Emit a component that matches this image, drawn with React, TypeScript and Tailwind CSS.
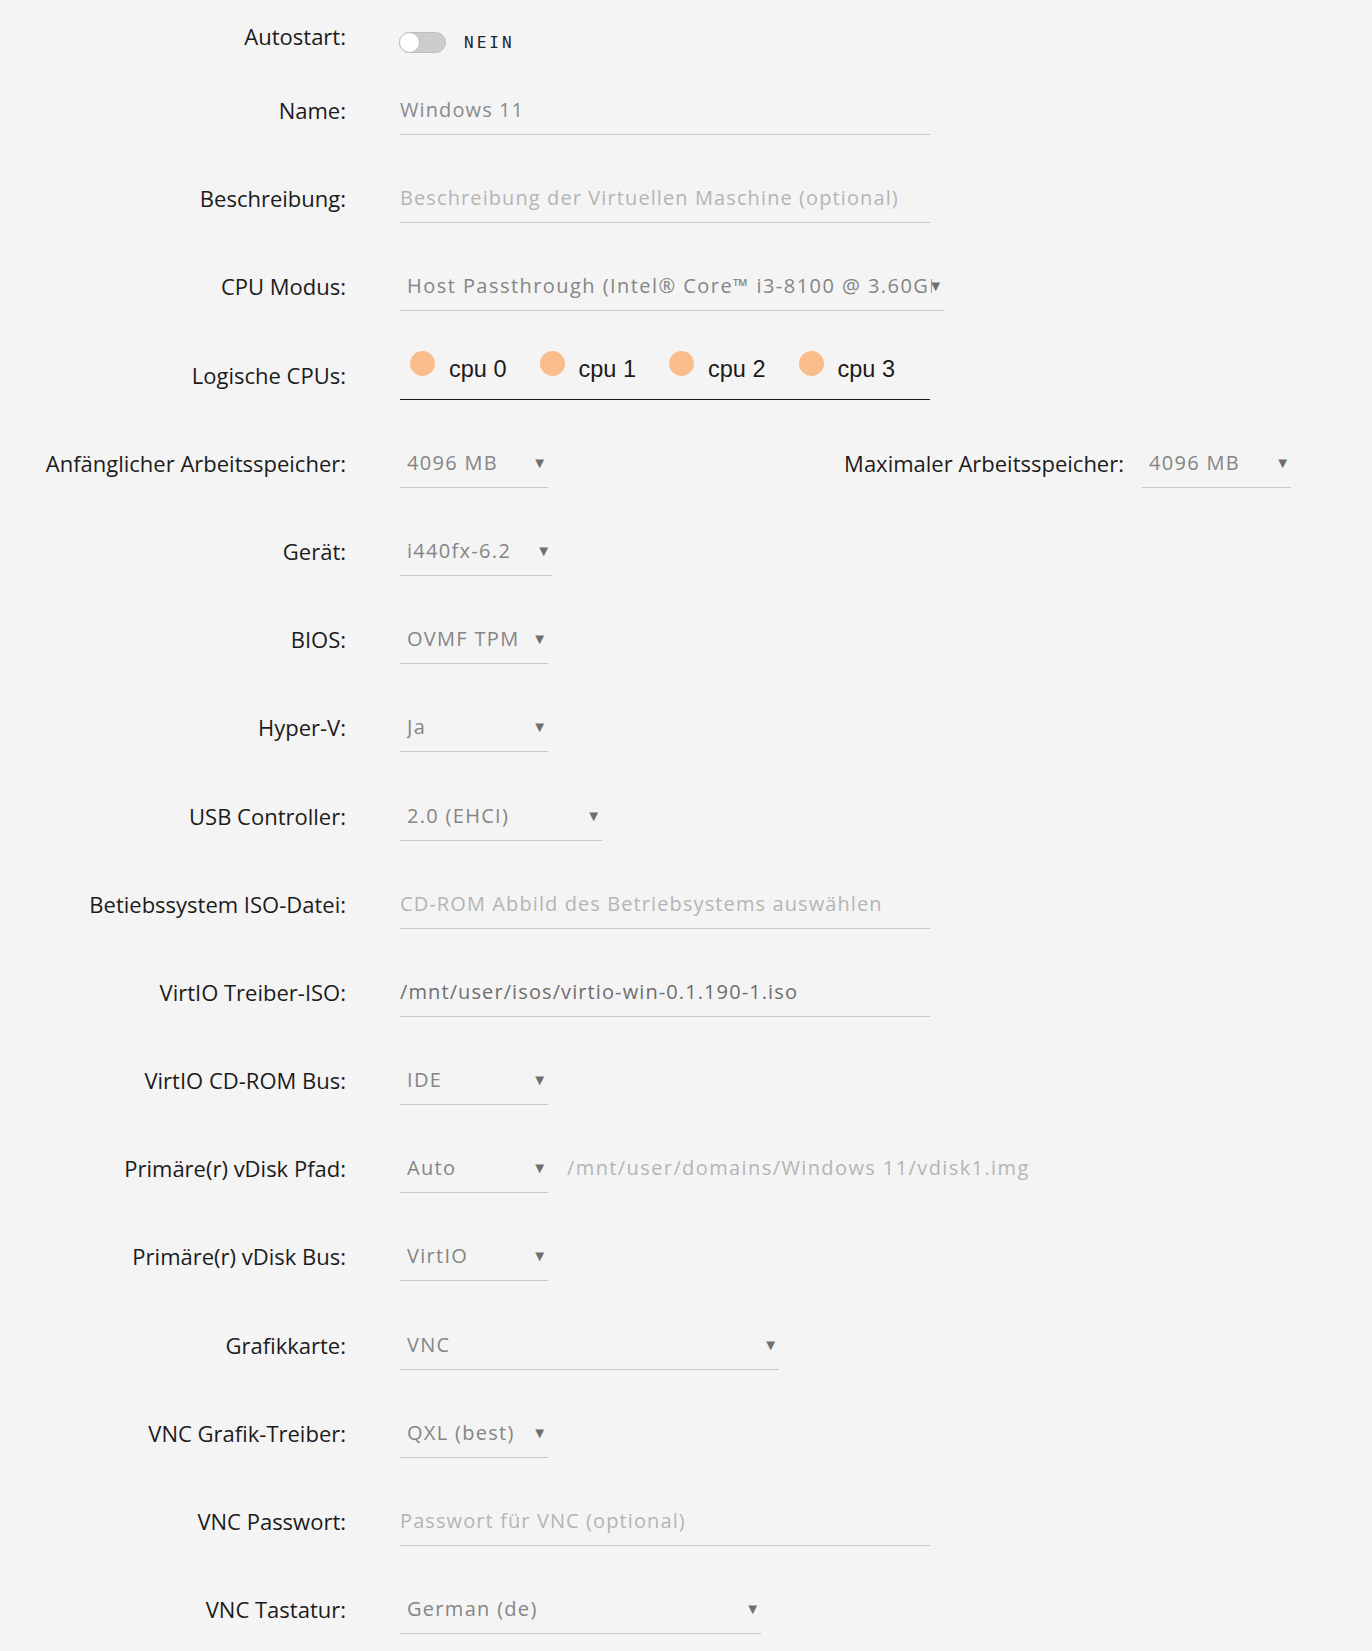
const labelFont = { fontFamily: '"Open Sans", "Noto Sans", sans-serif' };

type RowProps = {
  label: string;
  children: React.ReactNode;
};

function Row({ label, children }: RowProps) {
  return (
    <div className="flex h-[88.2px] items-start">
      <div className="w-[346px] shrink-0 text-right text-[22px] leading-[32px] text-[#1c1b1b]">{label}</div>
      <div className="ml-[54px] flex items-start">{children}</div>
    </div>
  );
}

function TextField({ value, placeholder, dark }: { value?: string; placeholder?: string; dark?: boolean }) {
  return (
    <div
      className={`h-[41px] w-[530px] border-b border-[#c8c8c8] text-[20px] leading-[32px] tracking-[1.1px] whitespace-nowrap ${
        value ? (dark ? "text-[#6e6e6e]" : "text-[#8a8a8a]") : "text-[#b4b4b4]"
      }`}
    >
      {value ?? placeholder}
    </div>
  );
}

function Select({ value, width, wide }: { value: string; width: string; wide?: boolean }) {
  return (
    <div className={`relative h-[41px] border-b border-[#c8c8c8] ${width}`}>
      <div
        className={`ml-[7px] overflow-hidden whitespace-nowrap text-[20px] leading-[32px] text-[#858585] ${
          wide ? "mr-[12px] tracking-[1.45px]" : "mr-[14px] tracking-[1.3px]"
        }`}
      >
        {value}
      </div>
      <span className="absolute right-[1px] top-[5px] text-[15px] leading-[20px] text-[#707070]">▼</span>
    </div>
  );
}

export default function App() {
  const cpus = ["cpu 0", "cpu 1", "cpu 2", "cpu 3"];

  return (
    <div className="min-h-[1651px] bg-[#f4f4f4] pt-[20px]" style={labelFont}>
      {/* Autostart */}
      <div className="flex h-[74px] items-start">
        <div className="w-[346px] shrink-0 text-right text-[22px] leading-[32px] text-[#1c1b1b]">Autostart:</div>
        <div className="ml-[53px] mt-[9px] flex items-center">
          <div className="relative h-[21px] w-[47px] rounded-full border border-[#bdbdbd] bg-[#cdcdcd]">
            <div className="absolute left-[-1px] top-[-1px] h-[21px] w-[21px] rounded-full border border-[#bdbdbd] bg-white" />
          </div>
          <span
            className="ml-[18px] mt-[2px] text-[16px] tracking-[3px] text-[#1c2530]"
            style={{ fontFamily: '"DejaVu Sans Mono", monospace' }}
          >
            NEIN
          </span>
        </div>
      </div>

      <Row label="Name:">
        <TextField value="Windows 11" />
      </Row>
      <Row label="Beschreibung:">
        <TextField placeholder="Beschreibung der Virtuellen Maschine (optional)" />
      </Row>
      <Row label="CPU Modus:">
        <Select value="Host Passthrough (Intel® Core™ i3-8100 @ 3.60GHz)" width="w-[544px]" wide />
      </Row>
      <Row label="Logische CPUs:">
        <div className="flex h-[41px] w-[530px] items-start border-b border-[#1c1b1b] pl-[10px]">
          {cpus.map((cpu) => (
            <div key={cpu} className="mr-[33px] flex items-start">
              <span className="mt-[-8px] h-[25px] w-[25px] rounded-full bg-[#f9bd8b]" />
              <span
                className="ml-[14px] text-[23.5px] leading-[20px] text-[#1c1b1b]"
                style={{ fontFamily: '"Liberation Sans", Arial, sans-serif' }}
              >
                {cpu}
              </span>
            </div>
          ))}
        </div>
      </Row>

      <div className="flex h-[88.2px] items-start">
        <div className="w-[346px] shrink-0 text-right text-[22px] leading-[32px] text-[#1c1b1b]">Anfänglicher Arbeitsspeicher:</div>
        <div className="ml-[54px]">
          <Select value="4096 MB" width="w-[148px]" />
        </div>
        <div className="ml-[230px] w-[346px] shrink-0 text-right text-[22px] leading-[32px] text-[#1c1b1b]">Maximaler Arbeitsspeicher:</div>
        <div className="ml-[18px]">
          <Select value="4096 MB" width="w-[149px]" />
        </div>
      </div>

      <Row label="Gerät:">
        <Select value="i440fx-6.2" width="w-[152px]" />
      </Row>
      <Row label="BIOS:">
        <Select value="OVMF TPM" width="w-[148px]" />
      </Row>
      <Row label="Hyper-V:">
        <Select value="Ja" width="w-[148px]" />
      </Row>
      <Row label="USB Controller:">
        <Select value="2.0 (EHCI)" width="w-[202px]" />
      </Row>
      <Row label="Betiebssystem ISO-Datei:">
        <TextField placeholder="CD-ROM Abbild des Betriebsystems auswählen" />
      </Row>
      <Row label="VirtIO Treiber-ISO:">
        <TextField value="/mnt/user/isos/virtio-win-0.1.190-1.iso" dark />
      </Row>
      <Row label="VirtIO CD-ROM Bus:">
        <Select value="IDE" width="w-[148px]" />
      </Row>
      <Row label="Primäre(r) vDisk Pfad:">
        <Select value="Auto" width="w-[148px]" />
        <span className="ml-[19px] text-[20px] leading-[32px] tracking-[1.4px] whitespace-nowrap text-[#b4b4b4]">
          /mnt/user/domains/Windows 11/vdisk1.img
        </span>
      </Row>
      <Row label="Primäre(r) vDisk Bus:">
        <Select value="VirtIO" width="w-[148px]" />
      </Row>
      <Row label="Grafikkarte:">
        <Select value="VNC" width="w-[379px]" />
      </Row>
      <Row label="VNC Grafik-Treiber:">
        <Select value="QXL (best)" width="w-[148px]" />
      </Row>
      <Row label="VNC Passwort:">
        <TextField placeholder="Passwort für VNC (optional)" />
      </Row>
      <Row label="VNC Tastatur:">
        <Select value="German (de)" width="w-[361px]" />
      </Row>
    </div>
  );
}
